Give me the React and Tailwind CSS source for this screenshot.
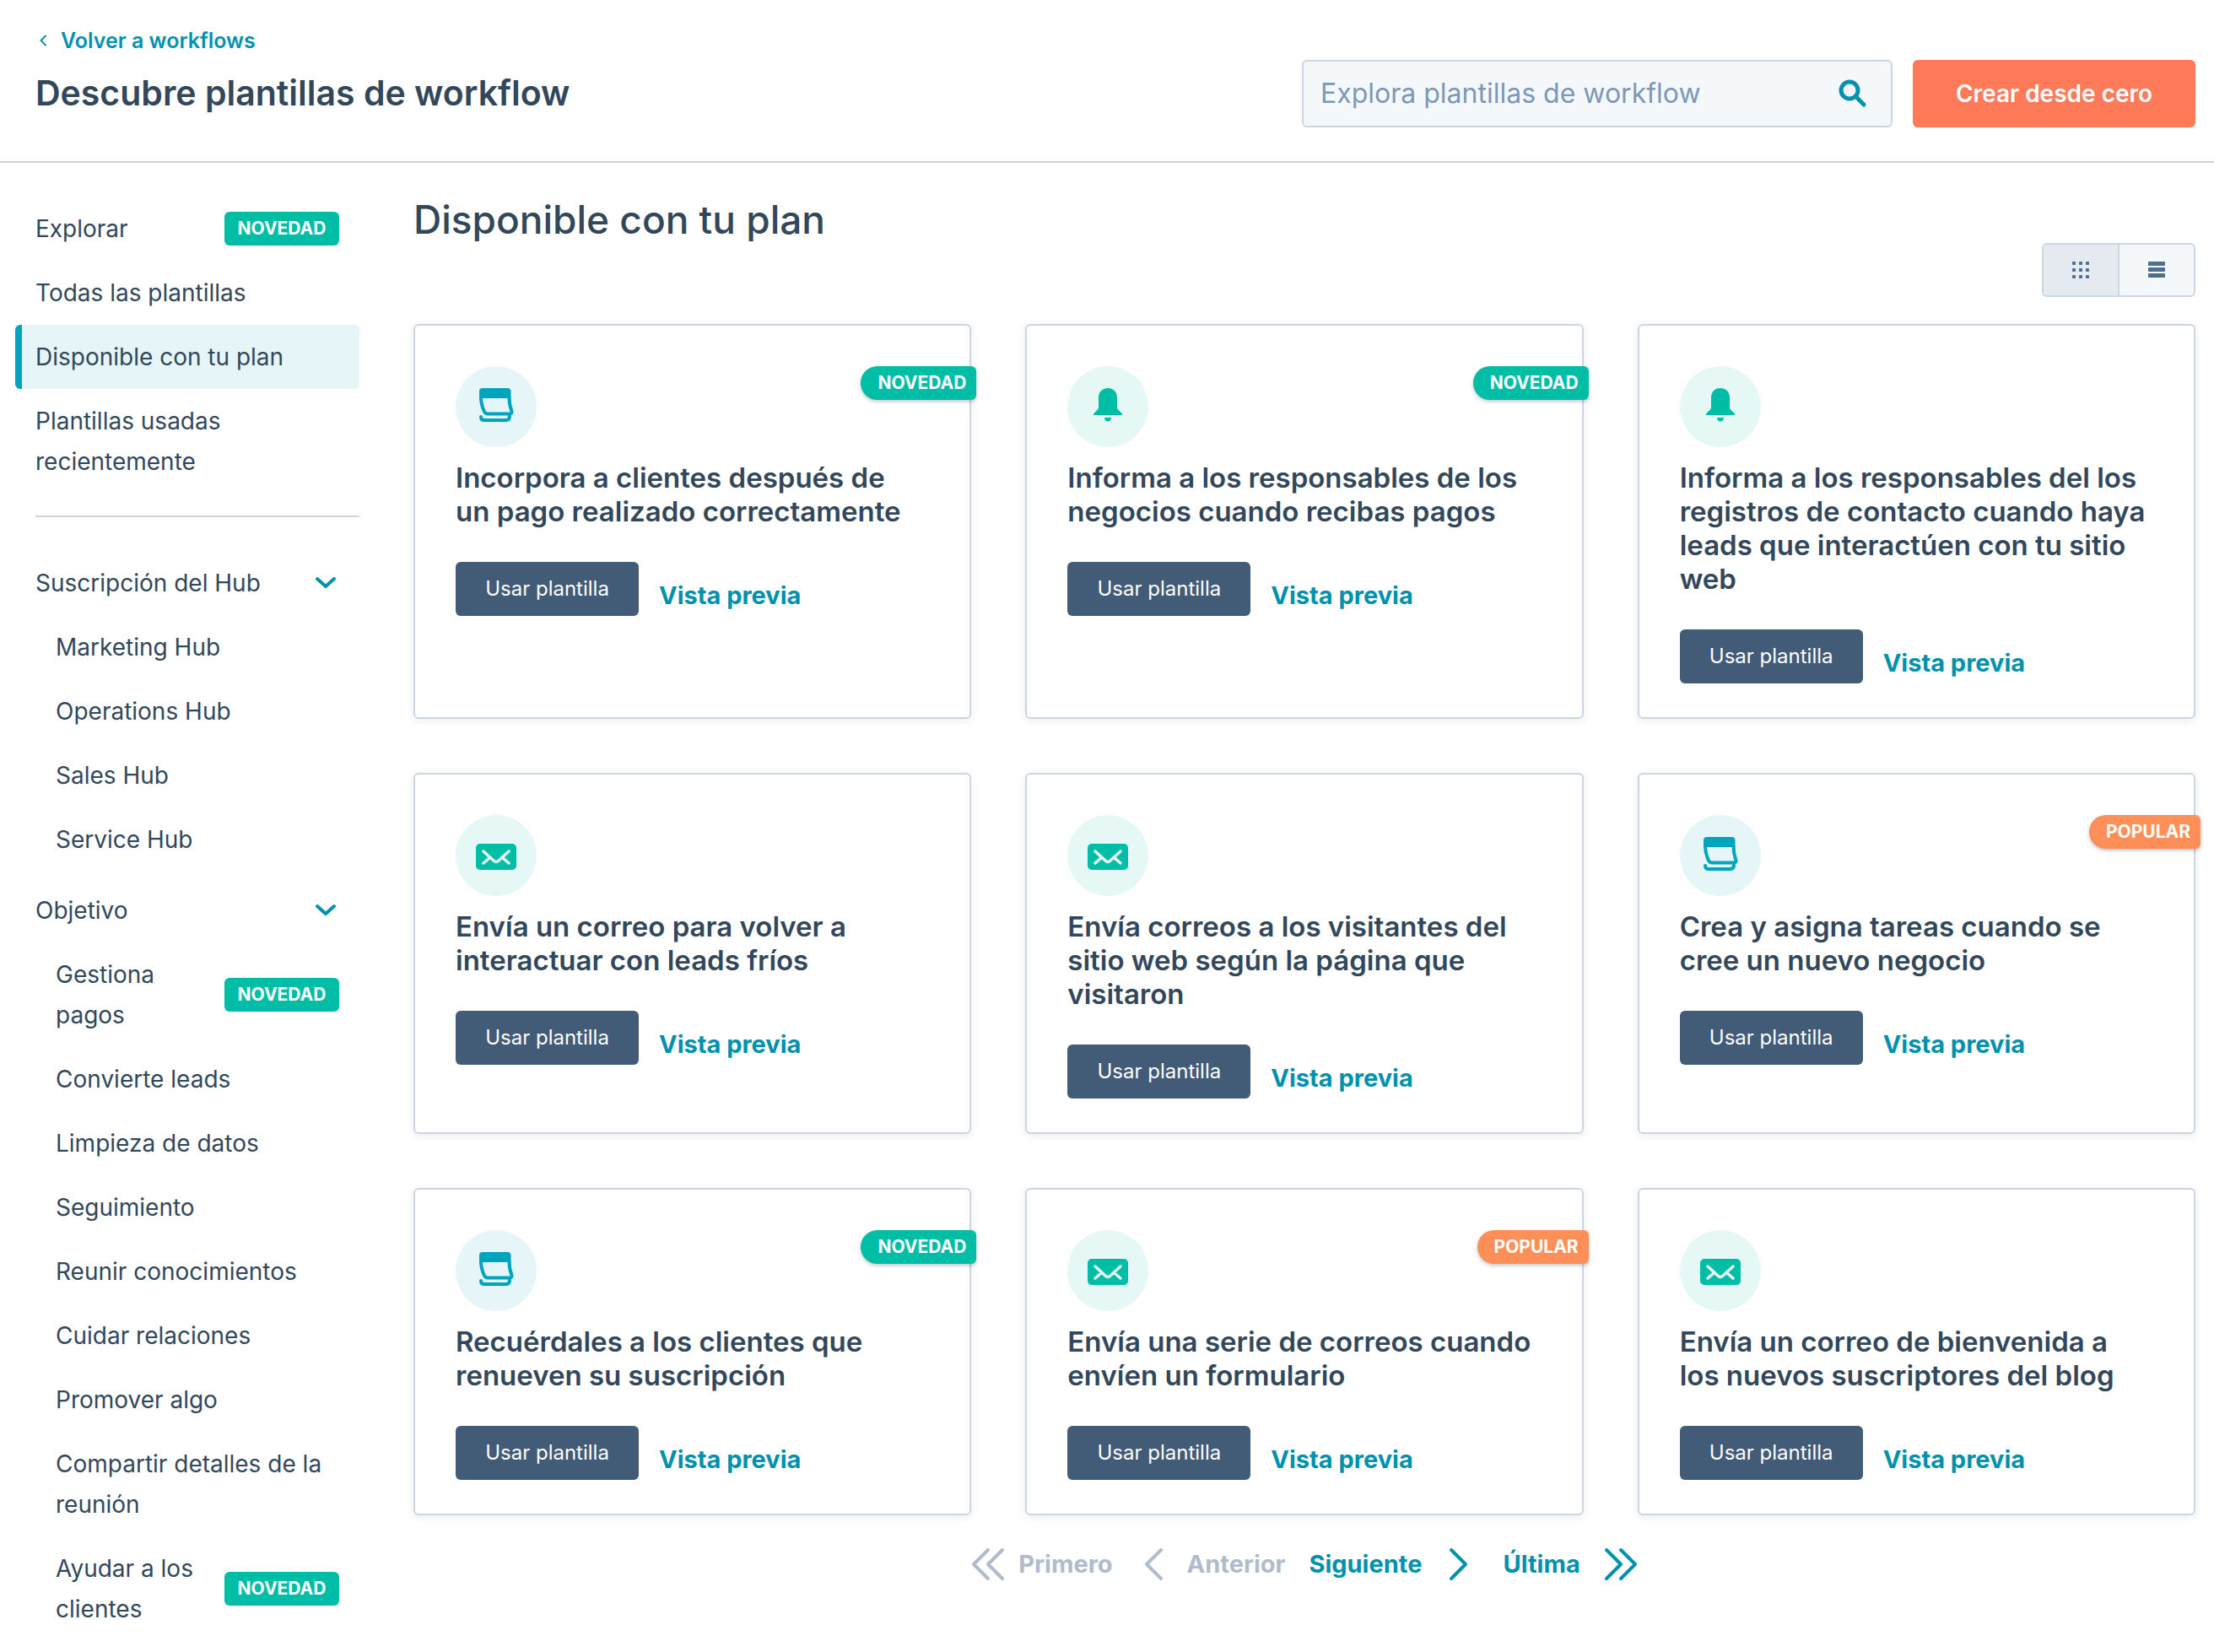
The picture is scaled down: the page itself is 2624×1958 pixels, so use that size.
import React from "react";

const plans = [
  { title: "Incorpora a clientes después de un pago realizado correctamente", icon: "task", badge: "NOVEDAD" },
  { title: "Informa a los responsables de los negocios cuando recibas pagos", icon: "bell", badge: "NOVEDAD" },
  { title: "Informa a los responsables del los registros de contacto cuando haya leads que interactúen con tu sitio web", icon: "bell" },
  { title: "Envía un correo para volver a interactuar con leads fríos", icon: "mail" },
  { title: "Envía correos a los visitantes del sitio web según la página que visitaron", icon: "mail" },
  { title: "Crea y asigna tareas cuando se cree un nuevo negocio", icon: "task", badge: "POPULAR" },
  { title: "Recuérdales a los clientes que renueven su suscripción", icon: "task", badge: "NOVEDAD" },
  { title: "Envía una serie de correos cuando envíen un formulario", icon: "mail", badge: "POPULAR" },
  { title: "Envía un correo de bienvenida a los nuevos suscriptores del blog", icon: "mail" },
];

const hubs = ["Marketing Hub", "Operations Hub", "Sales Hub", "Service Hub"];

const goals = [
  { label: "Gestiona pagos", isNew: true },
  { label: "Convierte leads" },
  { label: "Limpieza de datos" },
  { label: "Seguimiento" },
  { label: "Reunir conocimientos" },
  { label: "Cuidar relaciones" },
  { label: "Promover algo" },
  { label: "Compartir detalles de la reunión" },
  { label: "Ayudar a los clientes", isNew: true },
];

function TaskIcon() {
  return (
    <svg viewBox="0 0 42 42" className="mb-1 size-[42px]" fill="none" stroke="#00a4bd" strokeWidth="4" strokeLinejoin="round" strokeLinecap="round">
      <path d="M1 5q0-4 4-4h29.500q4 0 4 4v8H1z" fill="#00a4bd" stroke="none" />
      <path d="M3 12c0 8 2 12 4 17q1.500 2.500 4 2.500h26q3 0 2.500-3c-2-5-3-9-3-16.500" />
      <path d="M3 35q0 4 4 4h26q4 0 4-5" />
    </svg>
  );
}

function BellIcon() {
  return (
    <svg viewBox="0 0 34 40" className="mb-1 h-10 w-[34px]" fill="#00bda5">
      <path d="M17 0C10 0 6 5 6 11v12c0 3-5 5-6 8v1h34v-1c-1-3-6-5-6-8V11c0-6-4-11-11-11z" />
      <path d="M13 35h8c0 3-2 4.500-4 4.500s-4-1.500-4-4.500z" />
    </svg>
  );
}

function MailIcon() {
  return (
    <svg viewBox="0 0 48 32" className="mt-1 h-8 w-12" fill="none">
      <rect width="48" height="31" rx="5" fill="#00bda5" />
      <path d="M9 9l12 11q3 3 6 0L39 9M9 23l7-6M39 23l-7-6" stroke="#e5f8f6" strokeWidth="3.500" strokeLinecap="round" />
    </svg>
  );
}

function Chevron({ d, className }) {
  return (
    <svg viewBox="0 0 40 40" className={className} fill="none" stroke="currentColor" strokeWidth="4" strokeLinecap="round" strokeLinejoin="round">
      <path d={d} />
    </svg>
  );
}

function NewTag() {
  return (
    <span className="flex h-10 w-[136px] shrink-0 items-center justify-center rounded-md bg-[#00bda5] text-[21px] font-bold text-white">
      NOVEDAD
    </span>
  );
}

function NavItem({ label, isNew, active, nested }) {
  return (
    <li>
      <a
        href="#"
        className={
          "flex items-center justify-between gap-3 border-l-8 py-[14px] pr-6 " +
          (nested ? "pl-10 " : "pl-4 ") +
          (active ? "rounded-md border-[#00a4bd] bg-[#e5f5f8]" : "border-transparent")
        }
      >
        <span>{label}</span>
        {isNew && <NewTag />}
      </a>
    </li>
  );
}

function NavGroup({ label, children }) {
  return (
    <section>
      <button className="flex w-full items-center justify-between py-[14px] pr-5 pl-6 text-left">
        {label}
        <Chevron d="M10 15l10 9 10-9" className="size-10 text-[#0091ae]" />
      </button>
      <ul>{children}</ul>
    </section>
  );
}

function Card({ title, icon, badge }) {
  return (
    <article className="relative rounded-md border-2 border-[#cbd6e2] px-12 pt-12 pb-10 shadow-[0_2px_10px_rgba(45,62,80,0.10)]">
      <div className={"flex size-24 items-center justify-center rounded-full " + (icon === "task" ? "bg-[#e5f5f8]" : "bg-[#e5f8f6]")}>
        {icon === "task" && <TaskIcon />}
        {icon === "bell" && <BellIcon />}
        {icon === "mail" && <MailIcon />}
      </div>
      {badge && (
        <span
          className={
            "absolute top-12 -right-2 flex h-10 items-center rounded-l-[20px] rounded-r-md pr-3 pl-5 text-[21px] font-bold text-white shadow-[0_2px_4px_rgba(45,62,80,0.3)] " +
            (badge === "NOVEDAD" ? "bg-[#00bda5]" : "bg-[#ff8f59]")
          }
        >
          {badge}
        </span>
      )}
      <h3 className="mt-4 pr-2 text-[33px] leading-10 font-semibold">{title}</h3>
      <div className="mt-10 flex items-start gap-6">
        <button className="h-16 w-[217px] rounded-md bg-[#425b76] text-[24px] text-white">Usar plantilla</button>
        <a href="#" className="mt-5 text-[29px] leading-10 font-bold text-[#0091ae]">Vista previa</a>
      </div>
    </article>
  );
}

export default function App() {
  return (
    <div className="bg-white font-['Inter',sans-serif] text-[#33475b]">
      <header className="flex items-start justify-between border-b-2 border-[#cfd4d9] pt-7 pr-[22px] pb-10 pl-[42px]">
        <div>
          <a href="#" className="flex items-center gap-[10px] text-[25px] leading-10 font-semibold text-[#0091ae]">
            <Chevron d="M24 9L13 20l11 11" className="size-5" />
            Volver a workflows
          </a>
          <h1 className="mt-[6px] text-[41px] leading-[72px] font-semibold">Descubre plantillas de workflow</h1>
        </div>
        <div className="mt-[43px] flex gap-6">
          <label className="flex h-20 w-[700px] items-center rounded-md border-2 border-[#cbd6e2] bg-[#f5f8fa] pr-7 pl-5">
            <input
              type="search"
              aria-label="Explora plantillas de workflow"
              placeholder="Explora plantillas de workflow"
              className="min-w-0 flex-1 bg-transparent text-[32px] outline-none placeholder:text-[#7c98b6]"
            />
            <svg viewBox="0 0 34 34" className="size-[34px]" fill="none" stroke="#0091ae" strokeWidth="5" strokeLinecap="round">
              <circle cx="13" cy="13" r="10" />
              <path d="M21 21l9 9" />
            </svg>
          </label>
          <button className="h-20 w-[335px] rounded-md bg-[#ff7a59] text-[28px] font-semibold text-white">Crear desde cero</button>
        </div>
      </header>

      <div className="flex">
        <nav className="w-[426px] shrink-0 pt-10 pl-[18px] text-[28px] leading-[48px]">
          <ul>
            <NavItem label="Explorar" isNew />
            <NavItem label="Todas las plantillas" />
            <NavItem label="Disponible con tu plan" active />
            <NavItem label="Plantillas usadas recientemente" />
          </ul>
          <hr className="mt-[26px] mb-10 ml-6 border-t-2 border-[#cfd4d9]" />
          <NavGroup label="Suscripción del Hub">
            {hubs.map((hub) => (
              <NavItem key={hub} label={hub} nested />
            ))}
          </NavGroup>
          <div className="h-2" />
          <NavGroup label="Objetivo">
            {goals.map((goal) => (
              <NavItem key={goal.label} {...goal} nested />
            ))}
          </NavGroup>
        </nav>

        <main className="min-w-0 flex-1 pt-[39px] pr-[22px] pl-16">
          <h2 className="text-[46px] leading-[56px] font-medium">Disponible con tu plan</h2>
          <div className="flex justify-end">
            <div className="flex h-16 w-[182px] overflow-hidden rounded-md border-2 border-[#cbd6e2] text-[#506e91]">
              <button aria-label="Cuadrícula" className="flex flex-1 items-center justify-center border-r-2 border-[#cbd6e2] bg-[#e5eaf0]">
                <svg viewBox="0 0 20 20" className="size-5" fill="currentColor">
                  {[0, 8, 16].map((y) =>
                    [0, 8, 16].map((x) => <rect key={x + "-" + y} x={x} y={y} width="4" height="4" rx="1" />)
                  )}
                </svg>
              </button>
              <button aria-label="Lista" className="flex flex-1 items-center justify-center bg-[#f5f8fa]">
                <svg viewBox="0 0 20 20" className="size-5" fill="currentColor">
                  <rect y="0" width="20" height="5" rx="1" />
                  <rect y="7" width="20" height="5" rx="1" />
                  <rect y="14" width="20" height="5" rx="1" />
                </svg>
              </button>
            </div>
          </div>

          <div className="mt-8 grid grid-cols-3 gap-16">
            {plans.map((plan) => (
              <Card key={plan.title} {...plan} />
            ))}
          </div>

          <div className="mt-[34px] flex items-center justify-center text-[29px] leading-[48px] font-bold text-[#0091ae]">
            <button disabled className="flex items-center gap-4 text-[#b0bccb]">
              <Chevron d="M20 3L3 20l17 17M37 3L20 20l17 17" className="size-10" />
              Primero
            </button>
            <button disabled className="ml-7 flex items-center gap-5 text-[#b0bccb]">
              <Chevron d="M29 3L12 20l17 17" className="size-10" />
              Anterior
            </button>
            <button className="ml-7 flex items-center gap-6">
              Siguiente
              <Chevron d="M11 3l17 17-17 17" className="size-10" />
            </button>
            <button className="ml-8 flex items-center gap-7">
              Última
              <Chevron d="M3 3l17 17L3 37M20 3l17 17-17 17" className="size-10" />
            </button>
          </div>
        </main>
      </div>
    </div>
  );
}
